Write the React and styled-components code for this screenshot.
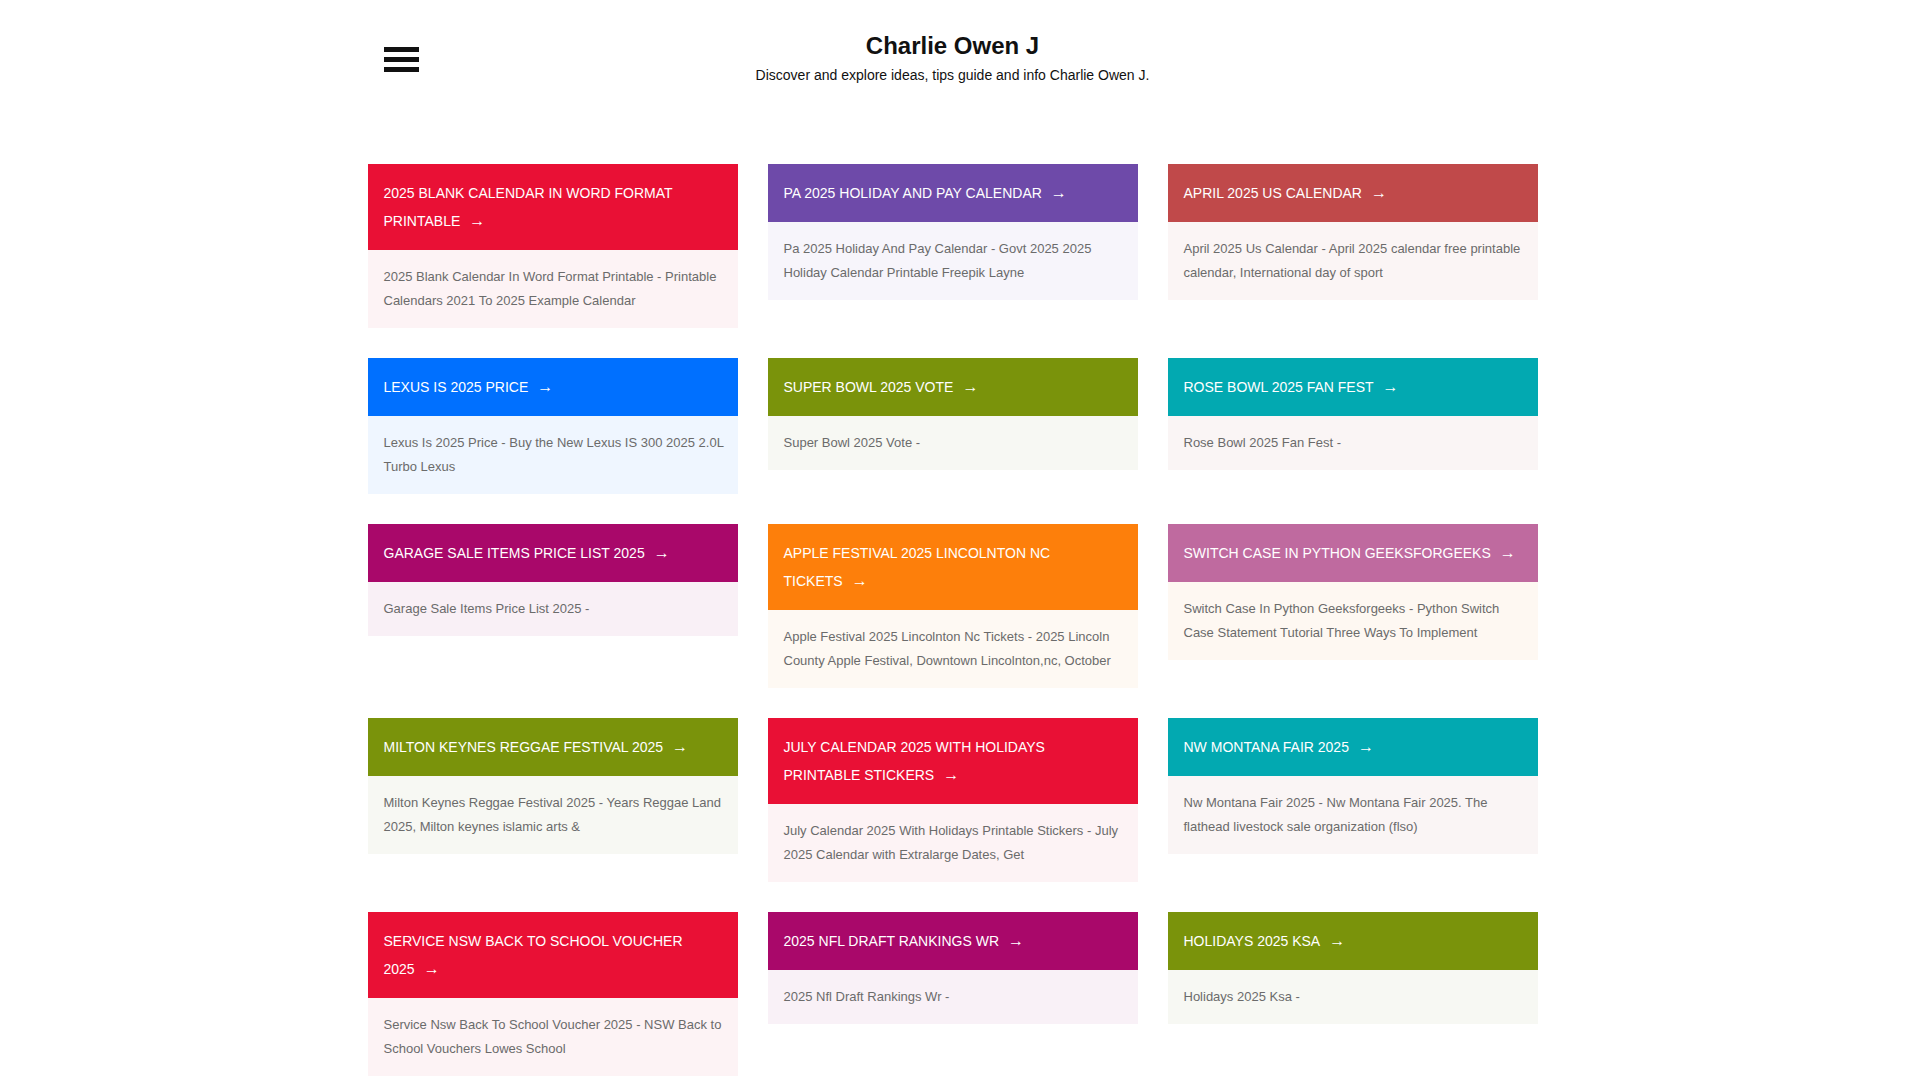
import React from 'react';
import styled, { createGlobalStyle } from 'styled-components';

const GlobalStyle = createGlobalStyle`
  html, body {
    margin: 0;
    padding: 0;
    background: #fff;
    font-family: "Liberation Sans", Arial, sans-serif;
    color: #222;
  }
  body {
    padding-right: 15px;
  }
`;

const Page = styled.div`
  width: 1170px;
  margin: 0 auto;
  padding-bottom: 120px;
`;

const Header = styled.header`
  display: grid;
  grid-template-columns: 1fr auto 1fr;
  align-items: start;
  padding-top: 33px;
  height: 164px;
  box-sizing: border-box;
`;

const MenuButton = styled.button`
  display: flex;
  flex-direction: column;
  gap: 5px;
  width: 35px;
  margin: 14px 0 0 16px;
  padding: 0;
  border: none;
  background: none;
  cursor: pointer;
`;

const MenuBar = styled.span`
  display: block;
  height: 5px;
  background: #111;
`;

const Brand = styled.div`
  text-align: center;
`;

const SiteTitle = styled.h1`
  margin: 0;
  font-size: 24px;
  line-height: 26px;
  font-weight: bold;
  color: #111;
`;

const Tagline = styled.p`
  margin: 6px 0 0;
  font-size: 14px;
  line-height: 20px;
  color: #111;
`;

const Grid = styled.main`
  display: grid;
  grid-template-columns: repeat(3, 370px);
  column-gap: 30px;
  row-gap: 30px;
  align-items: start;
`;

const Card = styled.article`
  display: flex;
  flex-direction: column;
`;

const CardHead = styled.a`
  display: block;
  padding: 15px 12px 15px 16px;
  background: ${(p) => p.$color};
  color: #fff;
  font-size: 14px;
  line-height: 28px;
  text-transform: uppercase;
  text-decoration: none;
`;

const Arrow = styled.span`
  margin-left: 9px;
  font-size: 16px;
  line-height: 1;
`;

const CardBody = styled.p`
  margin: 0;
  padding: 15px 10px 15px 16px;
  background: ${(p) => p.$tint};
  color: #6b6b6b;
  font-size: 13px;
  line-height: 24px;
`;

const RED = ['#e91035', '#fdf3f5'];
const PURPLE = ['#6e4aa9', '#f7f5fb'];
const BRICK = ['#c0494a', '#fbf5f5'];
const BLUE = ['#0070ff', '#eff6ff'];
const OLIVE = ['#7a930b', '#f7f8f3'];
const TEAL = ['#02a9b1', '#faf5f5'];
const MAGENTA = ['#a9086a', '#f9f0f6'];
const ORANGE = ['#fd7f0b', '#fef9f3'];
const PINK = ['#bf6a9f', '#fef8f2'];

const posts = [
  ['2025 Blank Calendar In Word Format Printable', '2025 Blank Calendar In Word Format Printable - Printable Calendars 2021 To 2025 Example Calendar', RED],
  ['Pa 2025 Holiday And Pay Calendar', 'Pa 2025 Holiday And Pay Calendar - Govt 2025 2025 Holiday Calendar Printable Freepik Layne', PURPLE],
  ['April 2025 Us Calendar', 'April 2025 Us Calendar - April 2025 calendar free printable calendar, International day of sport', BRICK],
  ['Lexus Is 2025 Price', 'Lexus Is 2025 Price - Buy the New Lexus IS 300 2025 2.0L Turbo Lexus', BLUE],
  ['Super Bowl 2025 Vote', 'Super Bowl 2025 Vote -', OLIVE],
  ['Rose Bowl 2025 Fan Fest', 'Rose Bowl 2025 Fan Fest -', TEAL],
  ['Garage Sale Items Price List 2025', 'Garage Sale Items Price List 2025 -', MAGENTA],
  ['Apple Festival 2025 Lincolnton Nc Tickets', 'Apple Festival 2025 Lincolnton Nc Tickets - 2025 Lincoln County Apple Festival, Downtown Lincolnton,nc, October', ORANGE],
  ['Switch Case In Python Geeksforgeeks', 'Switch Case In Python Geeksforgeeks - Python Switch Case Statement Tutorial Three Ways To Implement', PINK],
  ['Milton Keynes Reggae Festival 2025', 'Milton Keynes Reggae Festival 2025 - Years Reggae Land 2025, Milton keynes islamic arts &', OLIVE],
  ['July Calendar 2025 With Holidays Printable Stickers', 'July Calendar 2025 With Holidays Printable Stickers - July 2025 Calendar with Extralarge Dates, Get', RED],
  ['Nw Montana Fair 2025', 'Nw Montana Fair 2025 - Nw Montana Fair 2025. The flathead livestock sale organization (flso)', TEAL],
  ['Service Nsw Back To School Voucher 2025', 'Service Nsw Back To School Voucher 2025 - NSW Back to School Vouchers Lowes School', RED],
  ['2025 Nfl Draft Rankings Wr', '2025 Nfl Draft Rankings Wr -', ['#a9086a', '#f9f1f7']],
  ['Holidays 2025 Ksa', 'Holidays 2025 Ksa -', OLIVE],
];

export default function App() {
  return (
    <>
      <GlobalStyle />
      <Page>
        <Header>
          <MenuButton aria-label="Menu">
            <MenuBar />
            <MenuBar />
            <MenuBar />
          </MenuButton>
          <Brand>
            <SiteTitle>Charlie Owen J</SiteTitle>
            <Tagline>Discover and explore ideas, tips guide and info Charlie Owen J.</Tagline>
          </Brand>
          <div />
        </Header>
        <Grid>
          {posts.map(([title, text, [color, tint]]) => (
            <Card key={title}>
              <CardHead href="#" $color={color}>
                {title}
                <Arrow>→</Arrow>
              </CardHead>
              <CardBody $tint={tint}>{text}</CardBody>
            </Card>
          ))}
        </Grid>
      </Page>
    </>
  );
}
